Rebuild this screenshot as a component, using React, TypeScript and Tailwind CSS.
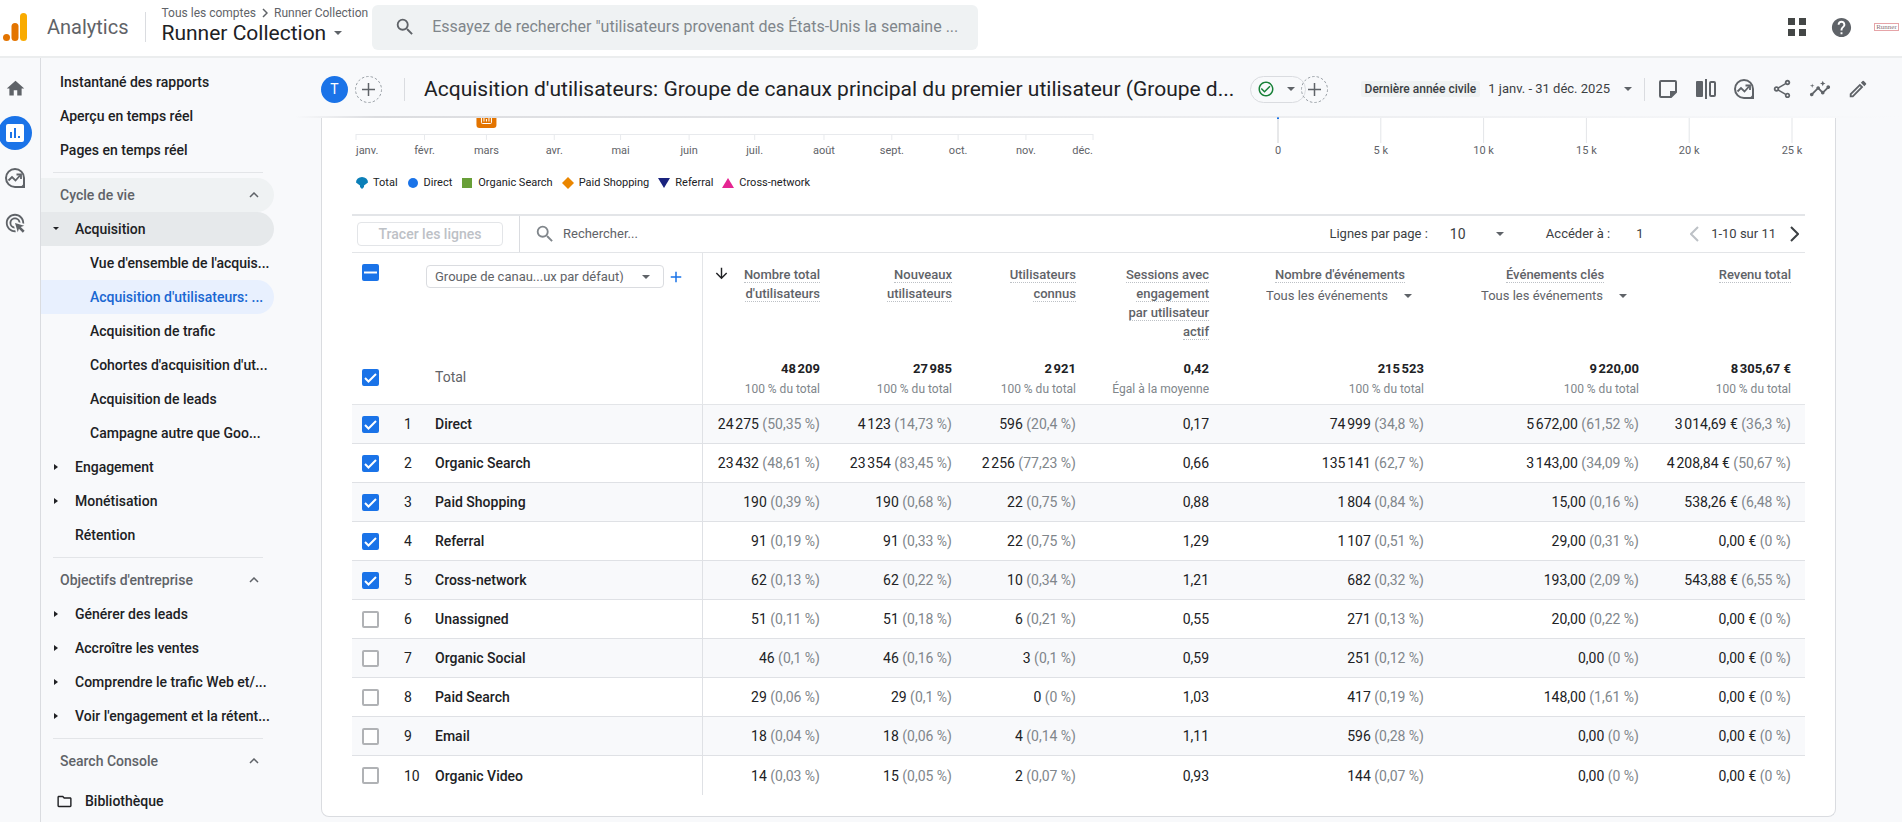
import { useState } from "react"
import clsx from "clsx"
import {
  MdAdd,
  MdAdsClick,
  MdArrowDownward,
  MdCheckCircleOutline,
  MdHelp,
  MdHome,
  MdInsights,
  MdOutlineFolder,
  MdOutlineModeEdit,
  MdOutlineShare,
  MdSearch,
} from "react-icons/md"

type NavItem = { label: string; level: 1 | 2; arrow?: "open" | "closed"; state?: "parent" | "active" }
type NavGroup = { title: string; highlighted?: boolean; items: NavItem[] }

const topLinks = ["Instantané des rapports", "Aperçu en temps réel", "Pages en temps réel"]

const navGroups: NavGroup[] = [
  {
    title: "Cycle de vie",
    highlighted: true,
    items: [
      { label: "Acquisition", level: 1, arrow: "open", state: "parent" },
      { label: "Vue d'ensemble de l'acquis...", level: 2 },
      { label: "Acquisition d'utilisateurs: ...", level: 2, state: "active" },
      { label: "Acquisition de trafic", level: 2 },
      { label: "Cohortes d'acquisition d'ut...", level: 2 },
      { label: "Acquisition de leads", level: 2 },
      { label: "Campagne autre que Goo...", level: 2 },
      { label: "Engagement", level: 1, arrow: "closed" },
      { label: "Monétisation", level: 1, arrow: "closed" },
      { label: "Rétention", level: 1 },
    ],
  },
  {
    title: "Objectifs d'entreprise",
    items: [
      { label: "Générer des leads", level: 1, arrow: "closed" },
      { label: "Accroître les ventes", level: 1, arrow: "closed" },
      { label: "Comprendre le trafic Web et/...", level: 1, arrow: "closed" },
      { label: "Voir l'engagement et la rétent...", level: 1, arrow: "closed" },
    ],
  },
  { title: "Search Console", items: [] },
]

const months = [
  { label: "janv.", x: 0 },
  { label: "févr.", x: 9.3 },
  { label: "mars", x: 17.7 },
  { label: "avr.", x: 26.9 },
  { label: "mai", x: 35.9 },
  { label: "juin", x: 45.2 },
  { label: "juil.", x: 54.1 },
  { label: "août", x: 63.5 },
  { label: "sept.", x: 72.7 },
  { label: "oct.", x: 81.7 },
  { label: "nov.", x: 90.9 },
  { label: "déc.", x: 100 },
]

const ticks = ["0", "5 k", "10 k", "15 k", "20 k", "25 k"]

const legend = ["Total", "Direct", "Organic Search", "Paid Shopping", "Referral", "Cross-network"]

const columns = [
  { title: ["Nombre total", "d'utilisateurs"], total: "48 209", note: "100 % du total", sorted: true },
  { title: ["Nouveaux", "utilisateurs"], total: "27 985", note: "100 % du total" },
  { title: ["Utilisateurs", "connus"], total: "2 921", note: "100 % du total" },
  { title: ["Sessions avec", "engagement", "par utilisateur", "actif"], total: "0,42", note: "Égal à la moyenne" },
  { title: ["Nombre d'événements"], total: "215 523", note: "100 % du total", filter: true },
  { title: ["Événements clés"], total: "9 220,00", note: "100 % du total", filter: true },
  { title: ["Revenu total"], total: "8 305,67 €", note: "100 % du total" },
]

const rows: { name: string; checked: boolean; cells: [string, string?][] }[] = [
  { name: "Direct", checked: true, cells: [["24 275", "50,35"], ["4 123", "14,73"], ["596", "20,4"], ["0,17"], ["74 999", "34,8"], ["5 672,00", "61,52"], ["3 014,69 €", "36,3"]] },
  { name: "Organic Search", checked: true, cells: [["23 432", "48,61"], ["23 354", "83,45"], ["2 256", "77,23"], ["0,66"], ["135 141", "62,7"], ["3 143,00", "34,09"], ["4 208,84 €", "50,67"]] },
  { name: "Paid Shopping", checked: true, cells: [["190", "0,39"], ["190", "0,68"], ["22", "0,75"], ["0,88"], ["1 804", "0,84"], ["15,00", "0,16"], ["538,26 €", "6,48"]] },
  { name: "Referral", checked: true, cells: [["91", "0,19"], ["91", "0,33"], ["22", "0,75"], ["1,29"], ["1 107", "0,51"], ["29,00", "0,31"], ["0,00 €", "0"]] },
  { name: "Cross-network", checked: true, cells: [["62", "0,13"], ["62", "0,22"], ["10", "0,34"], ["1,21"], ["682", "0,32"], ["193,00", "2,09"], ["543,88 €", "6,55"]] },
  { name: "Unassigned", checked: false, cells: [["51", "0,11"], ["51", "0,18"], ["6", "0,21"], ["0,55"], ["271", "0,13"], ["20,00", "0,22"], ["0,00 €", "0"]] },
  { name: "Organic Social", checked: false, cells: [["46", "0,1"], ["46", "0,16"], ["3", "0,1"], ["0,59"], ["251", "0,12"], ["0,00", "0"], ["0,00 €", "0"]] },
  { name: "Paid Search", checked: false, cells: [["29", "0,06"], ["29", "0,1"], ["0", "0"], ["1,03"], ["417", "0,19"], ["148,00", "1,61"], ["0,00 €", "0"]] },
  { name: "Email", checked: false, cells: [["18", "0,04"], ["18", "0,06"], ["4", "0,14"], ["1,11"], ["596", "0,28"], ["0,00", "0"], ["0,00 €", "0"]] },
  { name: "Organic Video", checked: false, cells: [["14", "0,03"], ["15", "0,05"], ["2", "0,07"], ["0,93"], ["144", "0,07"], ["0,00", "0"], ["0,00 €", "0"]] },
]

// French thousands separator is a narrow no-break space
const formatNumber = (value: string) => value.replace(/(\d) (\d)/g, "$1\u202f$2")

function Caret({ className }: { className?: string }) {
  return (
    <svg viewBox="0 0 8 4" className={clsx("h-1 w-2 shrink-0 fill-current", className)} aria-hidden="true">
      <path d="M0 0h8L4 4z" />
    </svg>
  )
}

function TrendIcon() {
  return (
    <svg viewBox="0 0 22 22" className="size-[22px]" fill="none" stroke="currentColor" strokeWidth="2" aria-hidden="true">
      <path d="M11 2a9 9 0 1 0 0 18h9v-9a9 9 0 0 0-9-9z" />
      <path d="M20.5 14v6.5H14c3 0 6-3 6.5-6.5z" fill="currentColor" stroke="none" />
      <path d="M4.5 13.5L8 10l3.5 3.5L16 8.5" strokeWidth="1.8" />
      <path d="M12.5 7.5H17V12" strokeWidth="1.8" />
    </svg>
  )
}

function NoteIcon() {
  return (
    <svg viewBox="0 0 22 22" className="size-[22px]" aria-hidden="true">
      <path d="M4 3h14a1 1 0 0 1 1 1v10l-5 5H4a1 1 0 0 1-1-1V4a1 1 0 0 1 1-1z" fill="none" stroke="currentColor" strokeWidth="2" />
      <path d="M13 20v-7h7z" fill="currentColor" />
    </svg>
  )
}

function CompareIcon() {
  return (
    <svg viewBox="0 0 22 22" className="size-[22px]" aria-hidden="true">
      <rect x="1" y="3" width="7" height="16" rx="1" fill="currentColor" />
      <path d="M11 1v20" stroke="currentColor" strokeWidth="2" />
      <rect x="15" y="4" width="5" height="14" rx="1" fill="none" stroke="currentColor" strokeWidth="2" />
    </svg>
  )
}

function ReportsIcon() {
  return (
    <svg viewBox="0 0 18 18" className="size-[18px]" aria-hidden="true">
      <rect width="18" height="18" rx="2" fill="#fff" />
      <path d="M5 8v6M9 4v10M13 12v2" stroke="#1a73e8" strokeWidth="2" />
    </svg>
  )
}

function Checkbox({ label, initial, mixed }: { label: string; initial: boolean; mixed?: boolean }) {
  const [checked, setChecked] = useState(initial)
  return (
    <label className="relative block size-[17px]">
      <input
        type="checkbox"
        aria-label={label}
        checked={checked}
        onChange={() => setChecked(!checked)}
        className="block size-[17px] appearance-none rounded-xs border-2 border-[#b0b2b5] bg-white checked:border-[#1a73e8] checked:bg-[#1a73e8]"
      />
      {checked && (
        <svg viewBox="0 0 17 17" className="pointer-events-none absolute inset-0 size-[17px]" fill="none" stroke="#fff" strokeWidth="2" aria-hidden="true">
          <path d={mixed ? "M2 8.5h13" : "M3 9l3.5 3.5L14 5"} />
        </svg>
      )}
    </label>
  )
}

function LegendMark({ name }: { name: string }) {
  return (
    <svg viewBox="0 0 12 12" className="size-3 shrink-0" aria-hidden="true">
      {name === "Total" && <path d="M0 5.5A6 5.5 0 0 1 12 5.5L8 8.5V10L6 12 4 10V8.5z" fill="#0b7fb8" />}
      {name === "Direct" && <circle cx="6" cy="6" r="5" fill="#1a73e8" />}
      {name === "Organic Search" && <path d="M1 1h10v10H1z" fill="#689f38" />}
      {name === "Paid Shopping" && <path d="M6 0l6 6-6 6-6-6z" fill="#ea8600" />}
      {name === "Referral" && <path d="M0 1h12L6 11z" fill="#1a237e" />}
      {name === "Cross-network" && <path d="M6 1l6 10H0z" fill="#e52592" />}
    </svg>
  )
}

function TopBar() {
  return (
    <header className="flex h-[58px] items-center border-b-2 border-[#ebedee] bg-white px-[3px] pb-0.5">
      <svg viewBox="0 0 24 28" className="h-7 w-6 shrink-0" aria-hidden="true">
        <rect x="17" y="0" width="7" height="28" rx="3.5" fill="#f9ab00" />
        <rect x="8.5" y="10" width="7" height="18" rx="3.5" fill="#e37400" />
        <circle cx="3.5" cy="24.5" r="3.5" fill="#e37400" />
      </svg>
      <span className="ml-5 text-xl text-[#5f6368]">Analytics</span>
      <span className="ml-4 h-[30px] w-px bg-[#dadce0]" />
      <div className="ml-4 flex flex-col pb-1">
        <nav className="flex items-center gap-[6px] text-xs leading-4 text-[#5f6368]" aria-label="Compte">
          <a href="#comptes">Tous les comptes</a>
          <svg viewBox="0 0 6 10" className="h-2.5 w-1.5" fill="none" stroke="currentColor" strokeWidth="1.5" aria-hidden="true">
            <path d="M1 1l4 4-4 4" />
          </svg>
          <a href="#runner">Runner Collection</a>
        </nav>
        <button type="button" className="flex items-center gap-2 text-[21px] leading-6 text-[#202124]">
          Runner Collection
          <Caret className="text-[#5f6368]" />
        </button>
      </div>
      <label className="ml-1 flex h-[45px] w-[606px] items-center rounded-md bg-[#eff2f3] pr-2 pl-[22px]">
        <MdSearch className="size-[22px] shrink-0 text-[#5f6368]" />
        <input
          type="text"
          aria-label="Rechercher"
          placeholder={"Essayez de rechercher \"utilisateurs provenant des États-Unis la semaine ..."}
          className="ml-4 w-full bg-transparent text-base text-[#202124] outline-none placeholder:text-[#80868b]"
        />
      </label>
      <div className="ml-auto flex items-center">
        <button type="button" aria-label="Applications" className="text-[#444746]">
          <svg viewBox="0 0 18 18" className="size-[18px] fill-current" aria-hidden="true">
            <path d="M0 0h7v7H0zM11 0h7v7h-7zM0 11h7v7H0zM11 11h7v7h-7z" />
          </svg>
        </button>
        <button type="button" aria-label="Aide" className="ml-6 text-[#5f6368]">
          <MdHelp className="size-[23px]" />
        </button>
        <a href="#profil" className="ml-[21px] flex h-2 w-[25px] items-center justify-center border border-[#e6a4a8] font-[Liberation_Serif,serif] text-[7px] leading-none text-[#8a7477]">
          Runner
        </a>
      </div>
    </header>
  )
}

function Rail() {
  return (
    <nav className="flex w-[41px] shrink-0 flex-col gap-[11px] border-r border-[#dadce0] pt-[13px] text-[#5f6368]" aria-label="Principal">
      <a href="#accueil" aria-label="Accueil" className="-ml-0.5 flex size-[34px] items-center justify-center">
        <MdHome className="size-[21px]" />
      </a>
      <a href="#rapports" aria-label="Rapports" className="-ml-0.5 flex size-[34px] items-center justify-center rounded-full bg-[#1a73e8]">
        <ReportsIcon />
      </a>
      <a href="#explorer" aria-label="Explorer" className="-ml-0.5 flex size-[34px] items-center justify-center">
        <TrendIcon />
      </a>
      <a href="#publicite" aria-label="Publicité" className="-ml-0.5 flex size-[34px] items-center justify-center">
        <MdAdsClick className="size-[22px]" />
      </a>
    </nav>
  )
}

function Sidebar() {
  return (
    <nav className="w-[254px] shrink-0 pt-[7px] text-sm font-medium text-[#202124]" aria-label="Rapports">
      {topLinks.map((link) => (
        <a key={link} href="#rapport" className="flex h-[34px] items-center pl-[19px]">
          {link}
        </a>
      ))}
      {navGroups.map((group) => (
        <section key={group.title}>
          <hr className="my-[5px] mr-8 ml-3 border-[#e3e5e8]" />
          <button
            type="button"
            className={clsx(
              "flex h-[34px] w-[233px] items-center justify-between rounded-r-full pr-[15px] pl-[19px] text-[#5f6368]",
              group.highlighted && "bg-[#eff2f3]"
            )}
          >
            {group.title}
            <svg viewBox="0 0 10 6" className="h-1.5 w-2.5" fill="none" stroke="currentColor" strokeWidth="1.5" aria-hidden="true">
              <path d="M1 5l4-4 4 4" />
            </svg>
          </button>
          {group.items.map((item) => (
            <a
              key={item.label}
              href="#rapport"
              className={clsx(
                "flex h-[34px] w-[233px] items-center rounded-r-full whitespace-nowrap",
                item.level === 1 ? "pl-2.5" : "pl-[49px]",
                item.state === "parent" && "bg-[#e6e9eb]",
                item.state === "active" && "bg-[#e8f0fe] text-[#1967d2]"
              )}
            >
              {item.level === 1 && (
                <span className="flex w-6 items-center pl-0.5">
                  {item.arrow && (
                    <svg viewBox="0 0 6 6" className="size-1.5 fill-current" aria-hidden="true">
                      <path d={item.arrow === "open" ? "M0 1h6L3 4z" : "M1 0l4 3-4 3z"} />
                    </svg>
                  )}
                </span>
              )}
              {item.label}
            </a>
          ))}
        </section>
      ))}
      <a href="#bibliotheque" className="mt-1.5 flex h-[34px] items-center gap-3 pl-[15px]">
        <MdOutlineFolder className="size-[17px]" />
        Bibliothèque
      </a>
    </nav>
  )
}

function AddCircle({ label }: { label: string }) {
  return (
    <button type="button" aria-label={label} className="size-[27px] shrink-0 text-[#5f6368]">
      <svg viewBox="0 0 27 27" className="size-[27px]" fill="none" stroke="currentColor" aria-hidden="true">
        <circle cx="13.5" cy="13.5" r="13" strokeDasharray="2.5 2" stroke="#9aa0a6" />
        <path d="M13.5 7v13M7 13.5h13" strokeWidth="1.5" />
      </svg>
    </button>
  )
}

function ReportHeader() {
  return (
    <div className="relative flex h-[60px] items-center pt-0.5 pr-[33px] pl-[26px] text-[#5f6368]">
      <span className="flex size-[27px] shrink-0 items-center justify-center rounded-full bg-[#1a73e8] text-sm text-white">T</span>
      <span className="ml-[7px] flex">
        <AddCircle label="Ajouter une comparaison" />
      </span>
      <span className="ml-[22px] h-[23px] w-px bg-[#dadce0]" />
      <h1 className="ml-[19px] text-[21px] leading-7 whitespace-nowrap text-[#202124]">
        Acquisition d'utilisateurs: Groupe de canaux principal du premier utilisateur (Groupe d...
      </h1>
      <button type="button" aria-label="Qualité des données" className="ml-4 flex h-[27px] w-14 items-center gap-3 rounded-full border border-[#dadce0] pl-[6px]">
        <MdCheckCircleOutline className="size-[18px] text-[#188038]" />
        <Caret />
      </button>
      <span className="-ml-[5px] flex">
        <AddCircle label="Ajouter un filtre" />
      </span>
      <button type="button" className="ml-auto flex items-center whitespace-nowrap">
        <span className="rounded-xs bg-[#eff2f3] px-1 text-xs leading-4 font-medium text-[#3c4043]">Dernière année civile</span>
        <span className="ml-2 text-[13px] leading-5 text-[#3c4043]">1 janv. - 31 déc. 2025</span>
        <Caret className="ml-3.5" />
      </button>
      <span className="ml-3 h-[23px] w-px bg-[#dadce0]" />
      <div className="ml-3 flex items-center gap-4">
        <button type="button" aria-label="Notes"><NoteIcon /></button>
        <button type="button" aria-label="Comparer"><CompareIcon /></button>
        <button type="button" aria-label="Explorer"><TrendIcon /></button>
        <button type="button" aria-label="Partager"><MdOutlineShare className="size-[22px]" /></button>
        <button type="button" aria-label="Insights"><MdInsights className="size-[22px]" /></button>
        <button type="button" aria-label="Modifier"><MdOutlineModeEdit className="size-[22px]" /></button>
      </div>
      <span className="absolute inset-x-0 bottom-0 h-0.5 bg-linear-to-r from-transparent from-0% via-[#dcdde0] via-5% to-transparent to-100%" />
    </div>
  )
}

function Charts() {
  return (
    <div className="grid grid-cols-[737fr_514fr] gap-[185px] pr-[13px] pl-1 text-[11px]">
      <svg className="h-[45px] w-full overflow-visible" role="img" aria-label="Utilisateurs par mois">
        <line x1="0" x2="100%" y1="16.5" y2="16.5" stroke="#e8eaed" />
        {months.map((m, i) => (
          <g key={m.label}>
            <line x1={`${m.x}%`} x2={`${m.x}%`} y1="16" y2="22" stroke="#e8eaed" strokeWidth="1" />
            <text x={`${m.x}%`} y="36" fill="#5f6368" textAnchor={i === 0 ? "start" : i === months.length - 1 ? "end" : "middle"}>
              {m.label}
            </text>
          </g>
        ))}
        <svg x="17.7%" y="0" className="overflow-visible">
          <path d="M-10 0H10V7a3 3 0 0 1-3 3H-7a3 3 0 0 1-3-3z" fill="#e37400" />
          <path d="M-5 0v4.5a1 1 0 0 0 1 1H4a1 1 0 0 0 1-1V0M-2.5 0v3.5M0 1v2.5M2.5 0v3.5" fill="none" stroke="#fff" strokeWidth="1" />
        </svg>
      </svg>
      <svg className="h-[45px] w-full overflow-visible" role="img" aria-label="Utilisateurs par canal">
        {ticks.map((t, i) => (
          <g key={t}>
            <line x1={`${i * 20}%`} x2={`${i * 20}%`} y1="0" y2="25" stroke={i === 0 ? "#cfd1d4" : "#e3e5e8"} strokeWidth="1" />
            <text x={`${i * 20}%`} y="36" fill="#5f6368" textAnchor="middle">{t}</text>
          </g>
        ))}
        <rect x="-1" y="-1" width="2" height="2" fill="#1a73e8" />
      </svg>
    </div>
  )
}

function TableToolbar() {
  return (
    <div className="flex h-[39px] items-center border-t-2 border-b border-[#e3e5e8] text-[13px] text-[#5f6368]">
      <button type="button" disabled className="ml-[5px] h-6 w-[146px] rounded-sm border border-[#e3e5e8] text-sm leading-none font-medium text-[#bdc1c6]">
        Tracer les lignes
      </button>
      <span className="ml-4 h-full w-px bg-[#dadce0]" />
      <label className="ml-3.5 flex items-center">
        <MdSearch className="size-[22px] text-[#80868b]" />
        <input type="text" aria-label="Rechercher dans le tableau" placeholder="Rechercher..." className="ml-[7px] w-60 bg-transparent outline-none placeholder:text-[#5f6368]" />
      </label>
      <div className="ml-auto flex items-center pr-1.5 text-[#3c4043]">
        <label htmlFor="page-size">Lignes par page :</label>
        <div className="relative ml-[22px]">
          <select id="page-size" defaultValue="10" className="block w-16 appearance-none bg-transparent text-sm outline-none">
            <option>10</option>
            <option>25</option>
            <option>50</option>
          </select>
          <Caret className="pointer-events-none absolute top-2 right-2.5 text-[#5f6368]" />
        </div>
        <label htmlFor="go-to" className="ml-8">Accéder à :</label>
        <input id="go-to" type="text" defaultValue="1" className="ml-[26px] w-8 bg-transparent text-[13px] outline-none" />
        <button type="button" aria-label="Page précédente" disabled className="ml-[22px] text-[#bdc1c6]">
          <svg viewBox="0 0 9 16" className="h-4 w-[9px]" fill="none" stroke="currentColor" strokeWidth="2" aria-hidden="true">
            <path d="M8 1L1 8l7 7" />
          </svg>
        </button>
        <span className="ml-3">1-10 sur 11</span>
        <button type="button" aria-label="Page suivante" className="ml-3.5">
          <svg viewBox="0 0 9 16" className="h-4 w-[9px]" fill="none" stroke="currentColor" strokeWidth="2" aria-hidden="true">
            <path d="M1 1l7 7-7 7" />
          </svg>
        </button>
      </div>
    </div>
  )
}

function ChannelTable() {
  return (
    <table className="w-full table-fixed border-separate border-spacing-0 text-[13px] text-[#202124]">
      <colgroup>
        <col className="w-[52px]" />
        <col className="w-[22px]" />
        <col className="w-[277px]" />
        <col className="w-[133px]" />
        <col className="w-[132px]" />
        <col className="w-[124px]" />
        <col className="w-[133px]" />
        <col className="w-[215px]" />
        <col className="w-[215px]" />
        <col className="w-[150px]" />
      </colgroup>
      <thead>
        <tr className="h-[97px] align-top text-[#5f6368]">
          <th className="p-0 pt-[11px] pl-[10px]">
            <Checkbox label="Tout sélectionner" initial mixed />
          </th>
          <th className="p-0" />
          <th className="border-r border-[#e3e5e8] p-0 pt-3 font-normal">
            <div className="flex items-center">
              <div className="relative w-[238px]">
                <select aria-label="Dimension principale" className="block h-[23px] w-full appearance-none rounded-sm border border-[#dadce0] bg-transparent pr-6 pl-2 text-[13px] leading-none outline-none">
                  <option>Groupe de canau...ux par défaut)</option>
                </select>
                <Caret className="pointer-events-none absolute top-[10px] right-3.5" />
              </div>
              <button type="button" aria-label="Ajouter une dimension" className="ml-[3px] text-[#1a73e8]">
                <MdAdd className="size-[18px]" />
              </button>
            </div>
          </th>
          {columns.map((col) => (
            <th key={col.title[0]} scope="col" className={clsx("p-0 pt-3 text-right leading-[19px] font-medium last:pr-3.5", col.filter ? "pr-2" : "pr-4")}>
              <div className={clsx("flex", col.sorted ? "justify-between pl-[10px]" : "justify-end")}>
                {col.sorted && <MdArrowDownward className="size-[17px] text-[#202124]" />}
                <div className={col.filter ? "text-center" : undefined}>
                  {col.title.map((line) => (
                    <span key={line} className="block">
                      <span className="border-b border-dotted border-[#bdc1c6]">{line}</span>
                    </span>
                  ))}
                  {col.filter && (
                    <div className="relative mt-0.5 w-[184px]">
                      <select aria-label={`Filtre ${col.title[0]}`} className="block w-full appearance-none bg-transparent pl-[18px] text-[13px] leading-5 font-normal outline-none">
                        <option>Tous les événements</option>
                      </select>
                      <Caret className="pointer-events-none absolute top-2 right-5" />
                    </div>
                  )}
                </div>
              </div>
            </th>
          ))}
        </tr>
      </thead>
      <tbody>
        <tr className="h-[55px]">
          <td className="border-b border-[#e3e5e8] p-0 pl-[10px]">
            <Checkbox label="Total" initial />
          </td>
          <td className="border-b border-[#e3e5e8] p-0" />
          <td className="border-r border-b border-[#e3e5e8] p-0 pl-[9px] text-sm text-[#5f6368]">Total</td>
          {columns.map((col) => (
            <td key={col.title[0]} className="border-b border-[#e3e5e8] p-0 pt-1 pr-4 text-right last:pr-3.5">
              <div className="leading-[21px] font-bold">{formatNumber(col.total)}</div>
              <div className="text-xs leading-[21px] text-[#80868b]">{col.note}</div>
            </td>
          ))}
        </tr>
        {rows.map((row, i) => (
          <tr key={row.name} className="group h-[39px] odd:bg-white even:bg-[#f8f9fb]">
            <td className="border-b border-[#dfe1e5] p-0 pl-[10px] group-last:border-b-0">
              <Checkbox label={row.name} initial={row.checked} />
            </td>
            <td className="border-b border-[#dfe1e5] p-0 text-sm group-last:border-b-0">{i + 1}</td>
            <td className="border-r border-b border-[#dfe1e5] p-0 pl-[9px] text-sm font-medium group-last:border-b-0">{row.name}</td>
            {row.cells.map(([value, share], j) => (
              <td key={j} className="border-b border-[#dfe1e5] p-0 pr-4 text-right text-sm whitespace-nowrap group-last:border-b-0 last:pr-3.5">
                {formatNumber(value)}
                {share && <span className="text-[#80868b]"> ({share} %)</span>}
              </td>
            ))}
          </tr>
        ))}
      </tbody>
    </table>
  )
}

export default function App() {
  return (
    <div className="flex min-h-screen flex-col bg-[#f8f9fb] font-[Roboto,sans-serif]">
      <TopBar />
      <div className="flex flex-1">
        <Rail />
        <Sidebar />
        <main className="min-w-0 flex-1">
          <ReportHeader />
          <section className="mr-[66px] ml-[26px] rounded-b-lg border border-t-0 border-[#dadce0] bg-white px-[30px] pb-[21px]">
            <Charts />
            <ul className="mt-3 mb-[23px] flex h-4 items-center gap-[9px] pl-1 text-[11px] text-[#202124]">
              {legend.map((name) => (
                <li key={name} className="flex items-center gap-[5px]">
                  <LegendMark name={name} />
                  {name}
                </li>
              ))}
            </ul>
            <TableToolbar />
            <ChannelTable />
          </section>
        </main>
      </div>
    </div>
  )
}
